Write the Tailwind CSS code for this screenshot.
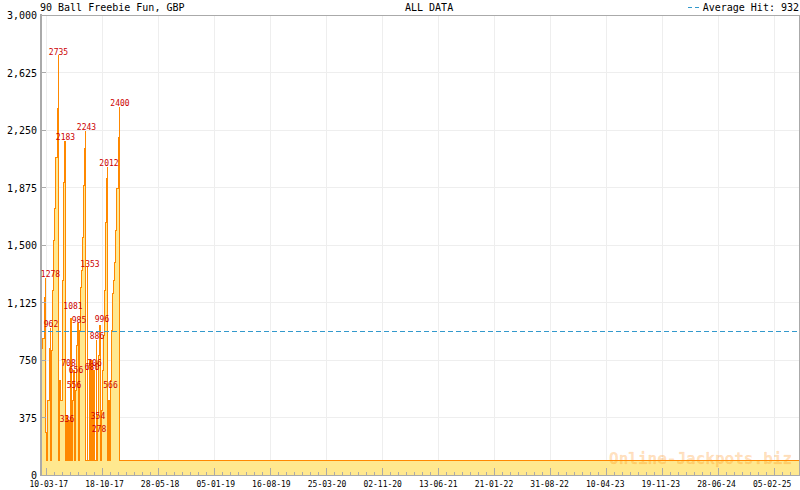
<!DOCTYPE html>
<html lang="en">
<head>
  <meta charset="UTF-8" />
  <title>90 Ball Freebie Fun, GBP</title>
  <script src="https://cdn.jsdelivr.net/npm/@tailwindcss/browser@4"></script>
</head>
<body class="bg-white">
  <div class="w-[800px] h-[490px] overflow-hidden flex flex-col text-black font-['DejaVu_Sans_Mono',monospace]">
    <!-- title row -->
    <div class="flex items-center h-[14px] pt-[1px] pl-[40px] pr-[1px] text-[10px] leading-[13px]">
      <span class="w-[365px]">90 Ball Freebie Fun, GBP</span>
      <span>ALL DATA</span>
      <span class="ml-auto flex items-center">
        <svg class="w-[15px] h-[13px]" viewBox="0 0 15 13" shape-rendering="crispEdges"><path d="M0 6.5H4M7 6.5H11" stroke="#3399cc" fill="none" /></svg>
        <span>Average Hit: 932</span>
      </span>
    </div>

    <div class="flex">
      <!-- y axis labels -->
      <div class="w-[37px] -mt-[5px] text-right text-[10px] leading-[14px]">
        <div class="h-[57.5px]">3,000</div>
        <div class="h-[57.5px]">2,625</div>
        <div class="h-[57.5px]">2,250</div>
        <div class="h-[57.5px]">1,875</div>
        <div class="h-[57.5px]">1,500</div>
        <div class="h-[57.5px]">1,125</div>
        <div class="h-[57.5px]">750</div>
        <div class="h-[57.5px]">375</div>
        <div class="h-[14px]">0</div>
      </div>
      <!-- plot, x=40 y=14 in page coords -->
      <svg class="ml-[3px] w-[760px] h-[462px] block" viewBox="40 14 760 462">
        <g shape-rendering="crispEdges" stroke="#eeeeee" fill="none">
          <path d="M41 72.5H799M41 130H799M41 187.5H799M41 245H799M41 302.5H799M41 360H799M41 417.5H799" />
          <path d="M46.5 15V475M102.5 15V475M158.5 15V475M214.5 15V475M270.5 15V475M326.5 15V475M382.5 15V475M438.5 15V475M494.5 15V475M550.5 15V475M606.5 15V475M662.5 15V475M718.5 15V475M774.5 15V475" />
        </g>
        <path shape-rendering="crispEdges" fill="#ffe88f" stroke="#ff8800" stroke-width="1"
          d="M40.5 490V348H42.5V338H44.5V297H45.5V278V432H46.5V460H47.5V400H49.5V348H50.5V328V460H51.5V350H52.5V290H53.5V240H54.5V208H55.5V157H57.5V108H58.5V55V460H59.5V380H60.5V400H62.5V280H63.5V232V182H64.5V141H65.5V460H66.5V415H67.5V460H68.5V420H69.5V460H70.5V318H71.5V460H72.5V400H73.5V370H74.5V460H75.5V390H76.5V345H77.5V323H78.5V460H79.5V330H80.5V287H81.5V270H82.5V237H83.5V185H84.5V148H85.5V131V460H87.5V267V460H89.5V360H90.5V460H91.5V360H92.5V460H93.5V370H94.5V460H96.5V340V460H97.5V415H98.5V355H99.5V325H100.5V460H101.5V410H102.5V370H103.5V335H104.5V290H105.5V222H106.5V178H107.5V167V460H108.5V400H109.5V460H110.5V380H111.5V330H112.5V293H113.5V280H114.5V262H115.5V230H116.5V188H118.5V137H119.5V107V460.5H800V490Z" />
        <text x="609" y="464" fill="#ff8800" fill-opacity="0.25" stroke="#ff8800" stroke-opacity="0.12" stroke-width="0.5" font-size="16" font-weight="bold" font-family="DejaVu Sans Mono">Online-Jackpots.biz</text>
        <path shape-rendering="crispEdges" d="M40 331.5H799" stroke="#3399cc" stroke-dasharray="5 3" fill="none" />
        <!-- frame and ticks -->
        <g shape-rendering="crispEdges" stroke="#aaaaaa" fill="none">
          <path d="M40 15.5H800M40.5 14V476M41.5 14V476M799.5 15V476M40 475.5H800" />
          <path d="M46.5 468V475M102.5 468V475M158.5 468V475M214.5 468V475M270.5 468V475M326.5 468V475M382.5 468V475M438.5 468V475M494.5 468V475M550.5 468V475M606.5 468V475M662.5 468V475M718.5 468V475M774.5 468V475" />
          <path d="M54.5 472V475M62.5 472V475M70.5 472V475M78.5 472V475M86.5 472V475M94.5 472V475M110.5 472V475M118.5 472V475M126.5 472V475M134.5 472V475M142.5 472V475M150.5 472V475M166.5 472V475M174.5 472V475M182.5 472V475M190.5 472V475M198.5 472V475M206.5 472V475M222.5 472V475M230.5 472V475M238.5 472V475M246.5 472V475M254.5 472V475M262.5 472V475M278.5 472V475M286.5 472V475M294.5 472V475M302.5 472V475M310.5 472V475M318.5 472V475M334.5 472V475M342.5 472V475M350.5 472V475M358.5 472V475M366.5 472V475M374.5 472V475M390.5 472V475M398.5 472V475M406.5 472V475M414.5 472V475M422.5 472V475M430.5 472V475M446.5 472V475M454.5 472V475M462.5 472V475M470.5 472V475M478.5 472V475M486.5 472V475M502.5 472V475M510.5 472V475M518.5 472V475M526.5 472V475M534.5 472V475M542.5 472V475M558.5 472V475M566.5 472V475M574.5 472V475M582.5 472V475M590.5 472V475M598.5 472V475M614.5 472V475M622.5 472V475M630.5 472V475M638.5 472V475M646.5 472V475M654.5 472V475M670.5 472V475M678.5 472V475M686.5 472V475M694.5 472V475M702.5 472V475M710.5 472V475M726.5 472V475M734.5 472V475M742.5 472V475M750.5 472V475M758.5 472V475M766.5 472V475M782.5 472V475M790.5 472V475" />
          <path d="M42 72.5H46M42 130H46M42 187.5H46M42 245H46M42 302.5H46M42 360H46M42 417.5H46" />
        </g>
        <!-- data labels -->
        <g fill="#cc0000" font-size="8" text-anchor="middle" font-family="DejaVu Sans Mono">
          <text x="58.5" y="55">2735</text>
          <text x="120" y="106">2400</text>
          <text x="86.5" y="130">2243</text>
          <text x="65.5" y="140">2183</text>
          <text x="109" y="166">2012</text>
          <text x="90" y="267">1353</text>
          <text x="50.5" y="277">1278</text>
          <text x="73" y="309">1081</text>
          <text x="79" y="323">985</text>
          <text x="102" y="322">996</text>
          <text x="51" y="327">962</text>
          <text x="97" y="339">886</text>
          <text x="68.5" y="366">708</text>
          <text x="94.5" y="366">706</text>
          <text x="92" y="370">680</text>
          <text x="76" y="373">656</text>
          <text x="74" y="388">556</text>
          <text x="110.5" y="388">566</text>
          <text x="67" y="422">336</text>
          <text x="98" y="419">354</text>
          <text x="99" y="432">278</text>
        </g>
      </svg>
    </div>

    <!-- x axis labels -->
    <div class="flex pl-[21px] -mt-[3px] text-[8px] leading-[10px]">
      <span class="w-[56px] text-center">10-03-17</span>
      <span class="w-[56px] text-center">18-10-17</span>
      <span class="w-[56px] text-center">28-05-18</span>
      <span class="w-[56px] text-center">05-01-19</span>
      <span class="w-[56px] text-center">16-08-19</span>
      <span class="w-[56px] text-center">25-03-20</span>
      <span class="w-[56px] text-center">02-11-20</span>
      <span class="w-[56px] text-center">13-06-21</span>
      <span class="w-[56px] text-center">21-01-22</span>
      <span class="w-[56px] text-center">31-08-22</span>
      <span class="w-[56px] text-center">10-04-23</span>
      <span class="w-[56px] text-center">19-11-23</span>
      <span class="w-[56px] text-center">28-06-24</span>
      <span class="w-[56px] text-center">05-02-25</span>
    </div>
  </div>
</body>
</html>
